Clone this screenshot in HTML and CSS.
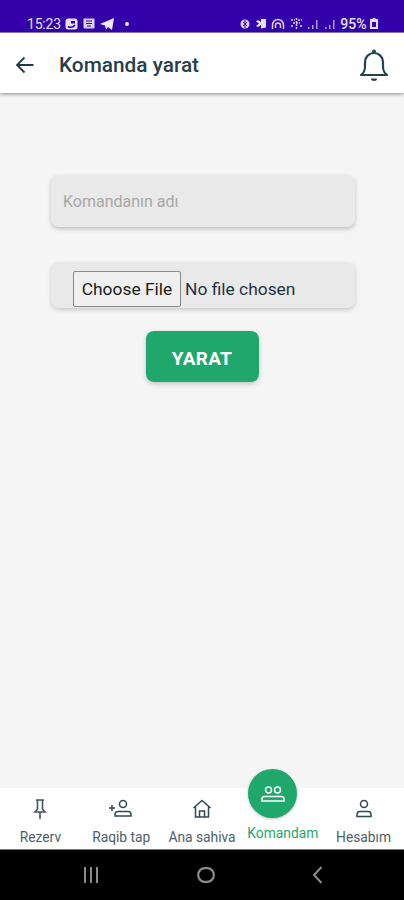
FILE: index.html
```html
<!DOCTYPE html>
<html lang="en">
<head>
    <meta charset="UTF-8">
    <meta name="viewport" content="width=device-width, initial-scale=1.0">
    <title>Komanda yarat</title>
    <link rel="stylesheet" href="styles.css">
</head>
<body>
    <div class="status-bar">
        <div class="status-left">
            <span class="clock">15:23</span>
            <svg width="13" height="12" viewBox="0 0 13 12"><rect x="0.5" y="0.5" width="12" height="11" rx="2.5" fill="#e4e0f4"/><path d="M3 8.5c2 1 5 1 7-1.5" stroke="#3300aa" stroke-width="1.6" fill="none"/><rect x="6" y="3" width="4" height="2.5" fill="#3300aa"/></svg>
            <svg width="12" height="11" viewBox="0 0 12 11"><rect x="0.5" y="0.5" width="11" height="10" rx="1" fill="#d8d2ee"/><path d="M3 3h6M3 5.5h6M4 8h4" stroke="#3300aa" stroke-width="1.2"/></svg>
            <svg width="14" height="12" viewBox="0 0 14 12"><path d="M0 6 14 0l-2 12-4-3-2 2.500-1-4z" fill="#ece9f7"/></svg>
            <span class="dot"></span>
        </div>
        <div class="status-right">
            <svg width="10" height="12" viewBox="0 0 10 12"><circle cx="5" cy="6" r="4.500" fill="#d8d2ee"/><path d="M5 2v8M3 4l4 4M3 8l4-4" stroke="#3300aa" stroke-width="1"/></svg>
            <svg width="12" height="11" viewBox="0 0 12 11"><path d="M1 3.500 4 5.500 1 8 3 9 6 7v3.500l5-1V1L6 1v3L3 2z" fill="#e4e0f4"/></svg>
            <svg width="14" height="12" viewBox="0 0 14 12"><path d="M1.500 11V7a5.500 5.500 0 0 1 11 0v4" fill="none" stroke="#d8d2ee" stroke-width="1.500"/><path d="M4.500 10V7.500a2.500 2.500 0 0 1 5 0V10" fill="none" stroke="#d8d2ee" stroke-width="1.500"/></svg>
            <svg width="13" height="13" viewBox="0 0 13 13"><path d="M1 3h4M8 3h4M3 6h7M1 9h3M6.500 1v11M10 9h2" stroke="#d8d2ee" stroke-width="1.500" stroke-dasharray="2 1"/></svg>
            <svg width="12" height="10" viewBox="0 0 12 10"><path d="M1 10V8h1.500v2zM5 10V6h1.500v4zM9 10V1h1.500v9z" fill="#a99fd8"/></svg>
            <svg width="12" height="10" viewBox="0 0 12 10"><path d="M1 10V8h1.500v2zM5 10V6h1.500v4zM9 10V1h1.500v9z" fill="#a99fd8"/></svg>
            <span class="battery-text">95%</span>
            <svg width="8" height="11" viewBox="0 0 8 11"><path d="M2.500 0h3v1H8v10H0V1h2.500z" fill="#e4e0f4"/><rect x="2" y="4" width="4" height="5" fill="#3300aa"/></svg>
        </div>
    </div>

    <div class="app-bar">
        <svg class="back-icon" width="20" height="18" viewBox="0 0 20 18"><path d="M18.500 9H2M9.500 1.500 2 9l7.500 7.500" fill="none" stroke="#1f3a44" stroke-width="1.800"/></svg>
        <div class="app-title">Komanda yarat</div>
        <svg class="bell-icon" width="30" height="34" viewBox="0 0 30 34"><path d="M2 27c3-2.500 4-4 4-8.500V14a9 9 0 0 1 18 0v4.500c0 4.500 1 6 4 8.500z" fill="none" stroke="#24444e" stroke-width="2.200" stroke-linejoin="round"/><circle cx="15" cy="3.500" r="2" fill="#24444e"/><path d="M12 30.500h6a3 2.500 0 0 1-6 0z" fill="#24444e"/></svg>
    </div>

    <div class="content">
        <input class="name-input" type="text" placeholder="Komandanın adı">
        <div class="file-box">
            <span class="file-btn">Choose File</span>
            <span class="file-text">No file chosen</span>
        </div>
        <button class="submit-btn">YARAT</button>
    </div>

    <div class="bottom-nav">
        <div class="nav-item">
            <svg width="18" height="22" viewBox="0 0 18 22"><path d="M5 2h8M6.500 2v9L4 14h10l-2.500-3V2M9 14v7" fill="none" stroke="#41565e" stroke-width="1.600"/></svg>
            <span class="nav-label">Rezerv</span>
        </div>
        <div class="nav-item">
            <svg width="24" height="22" viewBox="0 0 24 22"><circle cx="14" cy="6" r="3.500" fill="none" stroke="#2f4a54" stroke-width="1.500"/><path d="M6 18v-1.500q0-3 3-3h10q3 0 3 3V18z" fill="none" stroke="#2f4a54" stroke-width="1.500"/><path d="M0 10h6M3 7v6" stroke="#2f4a54" stroke-width="1.500"/></svg>
            <span class="nav-label">Raqib tap</span>
        </div>
        <div class="nav-item">
            <svg width="20" height="22" viewBox="0 0 20 22"><path d="M1.500 10 10 2.500l8.500 7.500M3.500 9v10h13V9" fill="none" stroke="#2f4a54" stroke-width="1.500"/><path d="M7.500 19v-6h5v6" fill="none" stroke="#2f4a54" stroke-width="1.500"/></svg>
            <span class="nav-label">Ana sahiva</span>
        </div>
        <div class="nav-item active">
            <span class="nav-label">Komandam</span>
        </div>
        <div class="nav-item">
            <svg width="20" height="22" viewBox="0 0 20 22"><circle cx="10" cy="6" r="3.500" fill="none" stroke="#2f4a54" stroke-width="1.500"/><path d="M3 18.500v-2q0-3 3-3h8q3 0 3 3v2z" fill="none" stroke="#2f4a54" stroke-width="1.500"/></svg>
            <span class="nav-label">Hesabım</span>
        </div>
        <div class="fab">
            <svg width="24" height="18" viewBox="0 0 24 18"><circle cx="7.500" cy="5" r="3" fill="none" stroke="#fff" stroke-width="1.500"/><circle cx="16.500" cy="5" r="3" fill="none" stroke="#fff" stroke-width="1.500"/><path d="M1 16v-2q0-2.500 2.500-2.500h17Q23 11.500 23 14v2z" fill="none" stroke="#fff" stroke-width="1.500"/></svg>
        </div>
    </div>

    <div class="system-nav">
        <svg width="16" height="16" viewBox="0 0 16 16"><path d="M2 0v16M8 0v16M14 0v16" stroke="#8c8c8c" stroke-width="2"/></svg>
        <svg width="18" height="16" viewBox="0 0 18 16"><rect x="1.200" y="1.200" width="15.600" height="13.600" rx="6.500" fill="none" stroke="#8c8c8c" stroke-width="2.200"/></svg>
        <svg width="11" height="18" viewBox="0 0 11 18"><path d="M9.500 1 2 9l7.500 8" fill="none" stroke="#8c8c8c" stroke-width="2"/></svg>
    </div>
</body>
</html>
```

FILE: styles.css
```css
* {
    box-sizing: border-box;
}
body {
    margin: 0;
    height: 900px;
    display: flex;
    flex-direction: column;
    font-family: Roboto, "Liberation Sans", sans-serif;
    background-color: #f5f5f5;
    overflow: hidden;
}
.status-bar {
    height: 33px;
    flex: none;
    padding: 15px 26px 0 27px;
    display: flex;
    justify-content: space-between;
    align-items: center;
    background-color: #3300aa;
    border-bottom: 1px solid #8f7fd0;
    color: #e4e0f4;
}
.status-left,
.status-right {
    display: flex;
    align-items: center;
    gap: 5px;
}
.status-right {
    gap: 4.500px;
}
.clock {
    font-size: 14px;
    letter-spacing: -0.2px;
    margin-right: -1px;
}
.battery-text {
    font-size: 14px;
    font-weight: 500;
    margin-right: -1px;
}
.dot {
    width: 4px;
    height: 4px;
    margin-left: 6px;
    border-radius: 50%;
    background-color: #ece9f7;
}
.app-bar {
    height: 60px;
    flex: none;
    padding: 3px 15px 0;
    display: flex;
    align-items: center;
    background-color: #fff;
    box-shadow: 0 1px 4px rgba(0, 0, 0, 0.45);
    position: relative;
}
.back-icon {
    flex: none;
}
.app-title {
    margin-left: 24px;
    font-size: 20.800px;
    font-weight: 500;
    color: #24404a;
    flex: 1;
}
.bell-icon {
    flex: none;
}
.content {
    flex: 1;
    padding-top: 82px;
    display: flex;
    flex-direction: column;
    align-items: center;
}
.name-input {
    width: 304px;
    height: 52px;
    margin-left: 2px;
    padding: 0 12px;
    border: none;
    border-radius: 8px;
    background-color: #e9e9e9;
    box-shadow: 0 2px 4px rgba(0, 0, 0, 0.22);
    font-family: inherit;
    font-size: 16px;
}
.name-input::placeholder {
    color: #a8a8a8;
}
.file-box {
    width: 304px;
    height: 46px;
    margin: 35px 0 0 2px;
    padding: 9px 0 0 22px;
    display: flex;
    align-items: flex-start;
    border-radius: 8px;
    background-color: #e9e9e9;
    box-shadow: 0 2px 4px rgba(0, 0, 0, 0.18);
}
.file-btn {
    width: 108px;
    height: 36px;
    display: flex;
    align-items: center;
    justify-content: center;
    border: 1px solid #8a8a8a;
    border-radius: 2px;
    background-color: #f0f0f0;
    font-size: 17.400px;
    color: #1a1a1a;
}
.file-text {
    margin-left: 4px;
    line-height: 36px;
    font-size: 17.400px;
    color: #1f3346;
}
.submit-btn {
    width: 113px;
    height: 51px;
    margin-top: 23px;
    padding-top: 5px;
    border: none;
    border-radius: 8px;
    background-color: #1fa76c;
    box-shadow: 0 2px 5px rgba(0, 0, 0, 0.2);
    font-family: inherit;
    font-size: 19px;
    font-weight: 700;
    letter-spacing: 0.3px;
    color: #fff;
}
.bottom-nav {
    height: 62px;
    flex: none;
    display: flex;
    background-color: #fff;
    border-bottom: 1px solid #777;
    position: relative;
}
.nav-item {
    flex: 1;
    display: flex;
    flex-direction: column;
    align-items: center;
    padding-top: 10px;
}
.nav-label {
    margin-top: 9px;
    font-size: 13.800px;
    line-height: 16px;
    color: #4d6068;
    white-space: nowrap;
}
.nav-item.active {
    justify-content: flex-end;
    padding-bottom: 8px;
}
.nav-item.active .nav-label {
    color: #1fa76c;
}
.fab {
    width: 49px;
    height: 49px;
    position: absolute;
    left: 248px;
    top: -19px;
    display: flex;
    align-items: center;
    justify-content: center;
    border-radius: 50%;
    background-color: #1fa76c;
    box-shadow: 0 1px 3px rgba(0, 0, 0, 0.25);
}
.system-nav {
    height: 50px;
    flex: none;
    padding: 0 81px 0 83px;
    display: flex;
    align-items: center;
    justify-content: space-between;
    background-color: #000;
}
```
